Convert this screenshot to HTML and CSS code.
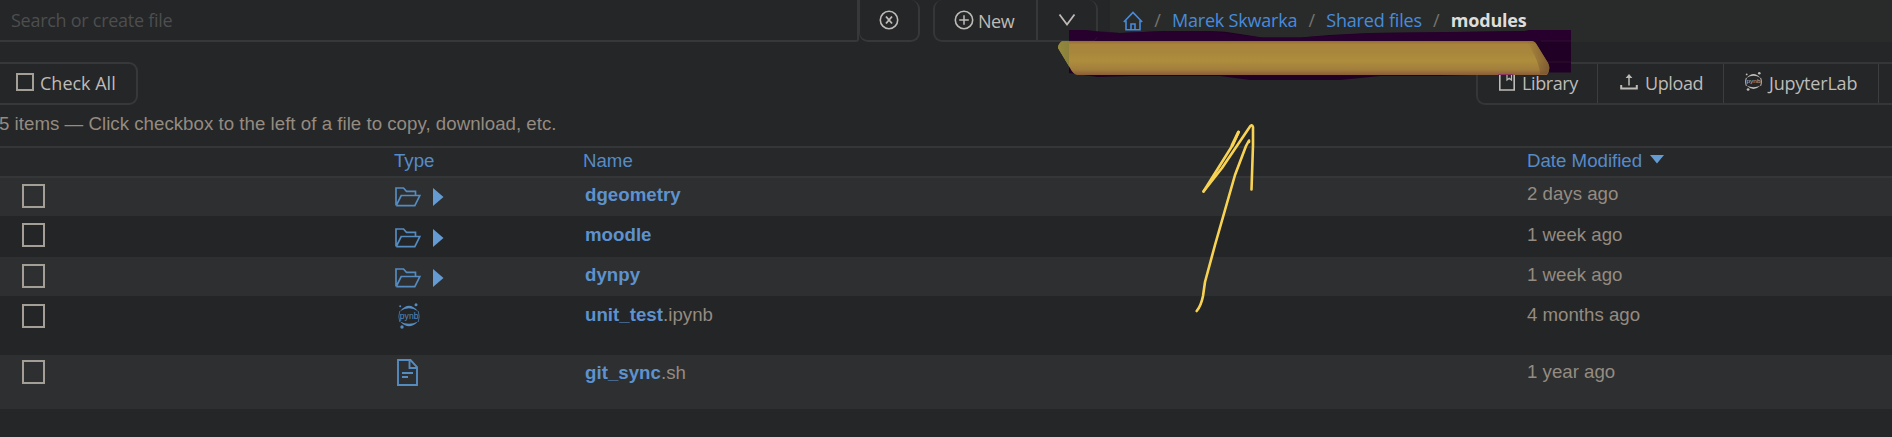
FILE: index.html
```html
<!DOCTYPE html>
<html lang="en">
<head>
<meta charset="utf-8">
<title>modules</title>
<link rel="stylesheet" href="styles.css">
</head>
<body>
<div class="page">
  <header class="topbar">
    <div class="search"><span class="t-search">Search or create file</span></div>
    <button class="btn clear"><svg width="20" height="20" viewBox="0 0 20 20"><circle cx="10" cy="10" r="8.700" fill="none" stroke="currentColor" stroke-width="1.600"/><path d="M7 6.500l6 7M13 6.500l-6 7" stroke="currentColor" stroke-width="1.900"/></svg></button>
    <div class="group">
      <button class="seg new"><svg width="20" height="20" viewBox="0 0 20 20"><circle cx="10" cy="10" r="8.700" fill="none" stroke="currentColor" stroke-width="1.600"/><path d="M10 5.200v9.600M5.200 10h9.600" stroke="currentColor" stroke-width="1.500"/></svg><span class="t-new">New</span></button>
      <button class="seg more"><svg width="18" height="14" viewBox="0 0 18 14"><path d="M1.500 1.500L9 11.500l7.500-10" fill="none" stroke="currentColor" stroke-width="1.800"/></svg></button>
    </div>
    <nav class="crumbs">
      <svg class="home" width="20" height="20" viewBox="0 0 20 20"><path d="M.8 11L10 1.500l9.200 9.500M3 9.500v9.300h14V9.500M8 18.500V13h4v5.500" fill="none" stroke="currentColor" stroke-width="1.600"/></svg>
      <i>/</i><a class="t-user">Marek Skwarka</a><i>/</i><a class="t-shared">Shared files</a><i>/</i><b class="t-mod">modules</b>
    </nav>
  </header>
  <div class="actions">
    <button class="check-all"><span class="box"></span><span class="t-check">Check All</span></button>
    <div class="tools">
      <button class="tool library"><svg width="16" height="18" viewBox="0 0 16 18"><path d="M.8.8h14.400v16.200H.8z" fill="none" stroke="currentColor" stroke-width="1.600"/><path d="M8 1v6l2.200-1.800L12.500 7V1" fill="none" stroke="currentColor" stroke-width="1.200"/></svg><span class="t-lib">Library</span></button>
      <button class="tool upload"><svg width="18" height="18" viewBox="0 0 18 18"><path d="M1.200 12v3.500h15.600V12" fill="none" stroke="currentColor" stroke-width="2"/><path d="M9 12.500V3" stroke="currentColor" stroke-width="1.500"/><path d="M5.600 5L9 1l3.400 4z" fill="currentColor"/></svg><span class="t-up">Upload</span></button>
      <button class="tool jupyter"><svg width="17" height="19" viewBox="0 0 22 26" preserveAspectRatio="none"><path d="M2 8.200Q11-2.800 20 8.200Q11 2.400 2 8.200ZM2 18.500Q11 28 20 18.500Q11 23.200 2 18.500Z" fill="currentColor"/><path d="M1.800 8Q-.2 13.500 1.800 19M20.200 8Q22.200 13.500 20.200 19" fill="none" stroke="currentColor" stroke-width="1.300"/><circle cx="18.500" cy="1.800" r="1.700" fill="currentColor"/><circle cx="2.200" cy="3.300" r="1.200" fill="currentColor"/><circle cx="4" cy="24" r="1.800" fill="currentColor"/><text class="nb-text" x="2" y="15.600" textLength="18" lengthAdjust="spacingAndGlyphs">pynb</text></svg><span class="t-jup">JupyterLab</span></button>
      <span class="tool last"></span>
    </div>
  </div>
  <p class="info">5 items — Click checkbox to the left of a file to copy, download, etc.</p>
  <section class="table">
    <div class="head"><span></span><span>Type</span><span class="hname">Name</span><span>Date Modified<svg class="sort" width="14" height="9" viewBox="0 0 14 9"><path d="M0 0h14L7 8.500z" fill="#649bd3"/></svg></span></div>
    <div class="row r1 alt"><span class="box big"></span><span class="type"><svg width="26" height="20" viewBox="0 0 26 20"><path d="M1 18.500V1H8.500l3 3.300h9V8M1.200 18.700h18.600L24.800 8.500H6.200L1.200 18.500" fill="none" stroke="currentColor" stroke-width="1.700"/></svg><svg class="tri" width="11" height="18" viewBox="0 0 11 18"><path d="M0 0L10.500 9 0 18z" fill="currentColor"/></svg></span><span class="name"><b>dgeometry</b></span><span class="date">2 days ago</span></div>
    <div class="row r2"><span class="box big"></span><span class="type"><svg width="26" height="20" viewBox="0 0 26 20"><path d="M1 18.500V1H8.500l3 3.300h9V8M1.200 18.700h18.600L24.800 8.500H6.200L1.200 18.500" fill="none" stroke="currentColor" stroke-width="1.700"/></svg><svg class="tri" width="11" height="18" viewBox="0 0 11 18"><path d="M0 0L10.500 9 0 18z" fill="currentColor"/></svg></span><span class="name"><b>moodle</b></span><span class="date">1 week ago</span></div>
    <div class="row r3 alt"><span class="box big"></span><span class="type"><svg width="26" height="20" viewBox="0 0 26 20"><path d="M1 18.500V1H8.500l3 3.300h9V8M1.200 18.700h18.600L24.800 8.500H6.200L1.200 18.500" fill="none" stroke="currentColor" stroke-width="1.700"/></svg><svg class="tri" width="11" height="18" viewBox="0 0 11 18"><path d="M0 0L10.500 9 0 18z" fill="currentColor"/></svg></span><span class="name"><b>dynpy</b></span><span class="date">1 week ago</span></div>
    <div class="row r4"><span class="box big"></span><span class="type nb"><svg width="22" height="26" viewBox="0 0 22 26"><path d="M2 8.200Q11-2.800 20 8.200Q11 2.400 2 8.200ZM2 18.500Q11 28 20 18.500Q11 23.200 2 18.500Z" fill="currentColor"/><path d="M1.800 8Q-.2 13.500 1.800 19M20.200 8Q22.200 13.500 20.200 19" fill="none" stroke="currentColor" stroke-width=".7"/><circle cx="18" cy="1.700" r="1.500" fill="currentColor"/><circle cx="2.200" cy="3.300" r="1" fill="currentColor"/><circle cx="4" cy="24" r="1.700" fill="currentColor"/><text class="nb-text" x="1.800" y="15.600" textLength="18.600">pynb</text></svg></span><span class="name"><b>unit_test</b>.ipynb</span><span class="date">4 months ago</span></div>
    <div class="row r5 alt"><span class="box big"></span><span class="type doc"><svg width="21" height="27" viewBox="0 0 21 27"><path d="M1 1h12.500L20 8v18H1zM12.500 1.500V9H20M5 14h11M5 18h6" fill="none" stroke="currentColor" stroke-width="1.900"/></svg></span><span class="name"><b>git_sync</b>.sh</span><span class="date">1 year ago</span></div>
  </section>
</div>
<svg class="ink" width="1892" height="437" viewBox="0 0 1892 437" aria-hidden="true">
  <defs>
    <linearGradient id="marker" x1="0" y1="0" x2="0" y2="1">
      <stop offset="0" stop-color="#946d35"/><stop offset=".1" stop-color="#a8843c"/><stop offset=".35" stop-color="#a8873c"/><stop offset=".58" stop-color="#ae8e3c"/><stop offset=".85" stop-color="#a17d3c"/><stop offset="1" stop-color="#8a5d37"/>
    </linearGradient>
    <linearGradient id="tipL"><stop offset="0" stop-color="#938a3c"/><stop offset="1" stop-color="#8b813c"/></linearGradient>
    <linearGradient id="fadeR"><stop offset="0" stop-color="#735030" stop-opacity="0"/><stop offset="1" stop-color="#735030" stop-opacity=".75"/></linearGradient>
  </defs>
  <path fill="#200024" d="M1069 30H1084L1100 32 1120 33 1165 31H1210Q1225 31 1240 34L1262 37.500H1300L1330 35 1370 33 1460 32 1525 31 1530 30H1571V72.500H1545L1440 76 1380 76 1340 80H1250L1220 76H1130L1098 77 1069 73Z"/>
  <path fill="#290030" opacity=".75" d="M1069 30H1084L1120 33 1165 31H1210L1262 37.500H1300L1370 33 1525 31 1530 30H1571V41H1069Z"/>
  <path fill="none" stroke="#30102f" d="M1097 37q-1 4-5 4h-23M1571 62h-30M1571 41h-30"/>
  <path fill="url(#marker)" d="M1062 41H1532Q1535 41 1537 45L1548 63Q1551 69 1547 75H1077Q1073 74 1070 68L1058 48Q1058 44 1062 41Z"/>
  <path fill="url(#tipL)" d="M1062 41.500H1069V66L1058 48Q1058 44 1062 41.500Z"/>
  <path fill="url(#fadeR)" d="M1527 42H1532Q1535 41 1537 45L1548 63Q1551 69 1547 74H1540Q1540 63 1527 42Z"/>
  <path fill="none" stroke="#8a355f" d="M1498 74.500h15"/>
  <g fill="none" stroke="#f8d353" stroke-width="2.600" stroke-linecap="round" stroke-linejoin="round">
    <path d="M1196.700 311Q1201 306 1203 296L1205 282 1215 245 1235 175 1246 146 1249 140.500V142"/>
    <path d="M1238.500 132L1233 144.500 1203.500 191.500"/>
    <path d="M1238.500 132L1232 145.500" stroke-width="3"/>
    <path d="M1203.500 191.500L1222 168 1249 128Q1252 123 1253 127V145L1251.500 189.500"/>
  </g>
</svg>
</body>
</html>
```
FILE: styles.css
```css
* { box-sizing: border-box; }
body { margin: 0; background: #242628; overflow: hidden; font-family: "Liberation Sans", sans-serif; font-size: 18.67px; color: #958b80; }
.page { height: 437px; white-space: nowrap; }
svg { flex: none; display: block; }
button { margin: 0; padding: 0; background: none; color: #bebbb6; border: 0 solid #36383a; font: inherit; letter-spacing: inherit; }
.topbar, .actions { font-family: "Open Sans", sans-serif; font-size: 18px; line-height: 24px; letter-spacing: -.2px; }
.topbar { display: flex; height: 42px; }
.search { width: 859px; border: solid #36383a; border-width: 0 2px 2px 0; border-bottom-right-radius: 3px; padding: 8px 0 0 11px; color: #4d4e4e; letter-spacing: -.27px; }
.btn.clear { display: flex; width: 61px; border-width: 0 2px 2px 1px; border-radius: 0 9px 9px 9px; padding: 10px 0 0 19px; }
.group { display: flex; margin-left: 13px; width: 165px; border: solid #343638; border-width: 0 2px 2px; border-radius: 9px; }
.seg { display: flex; }
.new { width: 103px; border-right-width: 2px; padding: 9px 0 0 19px; gap: 4px; letter-spacing: -.5px; }
.new svg { margin-top: 1px; }
.more { padding: 13px 0 0 20px; }
.crumbs { display: flex; flex: 1; margin-left: 12px; padding: 8px 0 0 13px; background: #292b2b; color: #478bdc; }
.home { margin-top: 3px; }
.crumbs i { font-style: normal; color: #77736c; width: 29px; text-align: center; }
.crumbs b { color: #deddda; }
.actions { display: flex; justify-content: space-between; margin-top: 20px; height: 43px; }
.check-all { display: flex; width: 138px; border-width: 2px 2px 2px 0; border-radius: 0 9px 9px 0; padding: 7px 0 0 16px; gap: 6px; letter-spacing: 0; }
.box { display: block; width: 18px; height: 18px; border: 2px solid #a39e96; margin-top: 2px; }
.tools { display: flex; width: 416px; border: solid #343638; border-width: 2px 0 2px 2px; border-radius: 9px 0 0 9px; }
.tool { display: flex; border-right: 1px solid #3b3d3f; padding-top: 7px; gap: 7px; letter-spacing: -.4px; }
.tool svg { margin-top: 2px; }
.library { width: 120px; padding-left: 21px; }
.upload { width: 126px; padding-left: 22px; }
.jupyter { width: 155px; padding-left: 21px; letter-spacing: -.2px; }
.tool.jupyter svg { margin-top: 1px; }
.nb-text { font: 8.5px "Liberation Sans", sans-serif; letter-spacing: 0; fill: currentColor; }
.last { border: 0; }
.info { margin: 6px 0 0 -1px; height: 35px; line-height: 26px; letter-spacing: .03px; }
.table { border-top: 2px solid #343638; }
.head, .row { display: grid; grid-template-columns: 394px 190px 943px 1fr; }
.head { height: 30px; border-bottom: 2px solid #343638; background: #26282a; color: #568bc9; line-height: 26px; }
.hname { margin-left: -1px; }
.sort { display: inline-block; margin-left: 8px; vertical-align: 3px; }
.row { background: #232527; align-items: start; }
.alt { background: #2d2f31; }
.r1 { height: 38px; }
.r2 { height: 41px; }
.r3 { height: 39px; }
.r4 { height: 59px; }
.r5 { height: 54px; }
.big { width: 23px; height: 24px; margin: 6px 0 0 22px; }
.r2 .big, .r3 .big { margin-top: 7px; }
.r4 .big { margin-top: 8px; }
.r5 .big { margin-top: 5px; }
.type { display: flex; gap: 12px; padding: 9px 0 0 1px; color: #568bc0; }
.r2 .type { padding-top: 12px; }
.r3 .type { padding-top: 11px; }
.tri { color: #649bd3; margin-top: 1px; }
.row .nb { padding: 7px 0 0 4px; }
.row .doc { padding: 4px 0 0 3px; }
.name, .date { line-height: 26px; padding-top: 4px; }
.name { padding-left: 1px; letter-spacing: .03px; }
.name b { color: #5e92ce; }
.r1 .date { padding-top: 3px; }
.r2 .name, .r2 .date { padding-top: 6px; }
.r3 .name, .r3 .date { padding-top: 5px; }
.r4 .name, .r4 .date { padding-top: 6px; }
.r5 .name { padding-top: 5px; }
.r5 .date { padding-top: 4px; }
.ink { position: absolute; left: 0; top: 0; }
```
